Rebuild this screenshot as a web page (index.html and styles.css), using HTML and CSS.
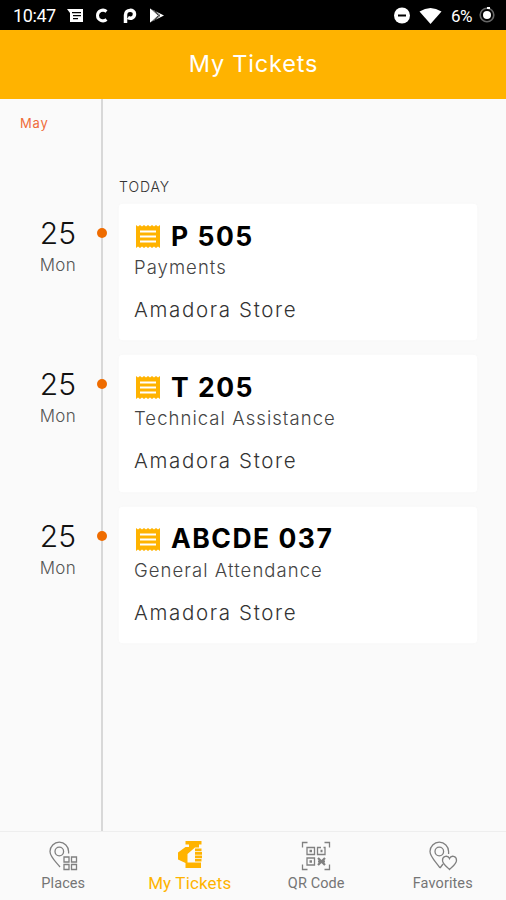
FILE: index.html
```html
<!DOCTYPE html>
<html lang="en">
<head>
    <meta charset="UTF-8">
    <meta name="viewport" content="width=device-width, initial-scale=1.0">
    <title>My Tickets</title>
    <link rel="stylesheet" href="styles.css">
</head>
<body>
    <svg class="defs">
        <symbol id="receipt" viewBox="0 0 24 25">
            <path fill="#ffb300" d="M0 1l2 1.5L4 1l2 1.5L8 1l2 1.5L12 1l2 1.5L16 1l2 1.5L20 1l2 1.5L24 1v23l-2-1.500-2 1.500-2-1.500-2 1.500-2-1.500-2 1.500-2-1.500-2 1.500-2-1.500-2 1.500-2-1.500-2 1.500z"/>
            <path stroke="#fff" stroke-width="2.200" d="M4 7.500h16M4 12.500h16M4 17.500h16"/>
        </symbol>
    </svg>

    <div class="statusbar">
        <span class="clock">10:47</span>
        <svg class="notifications" width="100" height="20" viewBox="0 0 100 20">
            <path fill="#fff" d="M-1 3h16v13H2V7z"/>
            <path stroke="#000" stroke-width="1.300" d="M4 6.700h9M5 9.700h8M5 12.700h5"/>
            <path fill="none" stroke="#fff" stroke-width="3" d="M38.500 5.500C35 2.500 29.500 5 29.500 9.500s5.500 7 9 4"/>
            <path fill="none" stroke="#fff" stroke-width="3.500" d="M57.500 17V9c0-6 9-6 9-1 0 4-4 5-6.500 3.500"/>
            <path fill="#fff" d="M82 2.500l14 7-14 7z"/>
            <path fill="none" stroke="#000" stroke-width=".8" d="M83 2.500l7.500 7-7.500 7M87 5l5 4.500-5 4.500"/>
        </svg>
        <svg class="signals" width="50" height="20" viewBox="0 0 50 20">
            <circle cx="8" cy="9.500" r="8" fill="#fff"/>
            <path stroke="#000" stroke-width="2" d="M4 9.500h8"/>
            <path fill="#fff" d="M25.500 5.500Q36.500-1.500 47.500 5.500L36.500 18z"/>
        </svg>
        <span class="battery">6%</span>
        <svg width="16" height="20" viewBox="0 0 16 20">
            <circle cx="8" cy="9" r="6.800" fill="none" stroke="#666" stroke-width="1.600"/>
            <circle cx="8" cy="9" r="4" fill="#fff"/>
            <path stroke="#fff" stroke-width="2" d="M8 2h3"/>
        </svg>
    </div>

    <h1 id="header">My Tickets</h1>

    <main class="timeline">
        <div class="month">May</div>
        <div class="today">TODAY</div>

        <div class="entry">
            <div class="date">
                <div class="day">25</div>
                <div class="weekday">Mon</div>
            </div>
            <span class="dot"></span>
            <div class="card">
                <div class="number"><svg class="receipt"><use href="#receipt"/></svg><span>P 505</span></div>
                <div class="service">Payments</div>
                <div class="store">Amadora Store</div>
            </div>
        </div>

        <div class="entry">
            <div class="date">
                <div class="day">25</div>
                <div class="weekday">Mon</div>
            </div>
            <span class="dot"></span>
            <div class="card">
                <div class="number"><svg class="receipt"><use href="#receipt"/></svg><span>T 205</span></div>
                <div class="service">Technical Assistance</div>
                <div class="store">Amadora Store</div>
            </div>
        </div>

        <div class="entry">
            <div class="date">
                <div class="day">25</div>
                <div class="weekday">Mon</div>
            </div>
            <span class="dot"></span>
            <div class="card">
                <div class="number"><svg class="receipt"><use href="#receipt"/></svg><span>ABCDE 037</span></div>
                <div class="service">General Attendance</div>
                <div class="store">Amadora Store</div>
            </div>
        </div>
    </main>

    <nav class="tabs">
        <a class="tab">
            <svg width="30" height="30" viewBox="0 0 30 30">
                <path d="M12 26C9 22 2 16 2 10.500a9.300 9.300 0 0 1 18.600 0v2"/>
                <circle cx="11.300" cy="10.500" r="4.300"/>
                <path d="M16 16h5v5h-5zM23.500 16h5v5h-5zM16 23.500h5v5h-5zM23.500 23.500h5v5h-5z"/>
            </svg>
            <span>Places</span>
        </a>
        <a class="tab active">
            <svg width="30" height="30" viewBox="0 0 30 30">
                <path d="M10.500 1h16v3.500H24V7.500h-4L12.500 14v8.500H26V28H10.500v-5L3 19.500v-7L10.500 7H14V4.500h-3.500z"/>
                <path d="M20 8.500h6.500v2.700H20zM20 12h7v2.700h-7zM20 15.500h7v2.700h-7zM20 19h6.500v2.500H20z"/>
            </svg>
            <span>My Tickets</span>
        </a>
        <a class="tab">
            <svg width="30" height="30" viewBox="0 0 30 30">
                <path d="M1.500 6.500v-5h5M23.500 1.500h5v5M28.500 23.500v5h-5M6.500 28.500h-5v-5"/>
                <path d="M6 6.500h7.500v7H6zM6 17h7.500v7H6zM20 6.500h-3.500v7h7.500v-7h-1.500"/>
                <path stroke-width="2.500" d="M8.500 10h2.500M8.500 20.500h2.500M19.500 10h2"/>
                <path stroke-width="2.200" d="M17 17l7 7M24 17l-7 7M17 20.500h7"/>
            </svg>
            <span>QR Code</span>
        </a>
        <a class="tab">
            <svg width="30" height="30" viewBox="0 0 30 30">
                <path d="M12 27C9 22 2 16 2 10.500a9.300 9.300 0 0 1 18.600 0v2.500"/>
                <circle cx="11.300" cy="10.500" r="4.300"/>
                <path d="M21.500 28.500c-3-3-7-5.500-7-9.300 0-4.500 5.500-5.200 7-1.700 1.500-3.500 7-2.800 7 1.700 0 3.800-4 6.300-7 9.300zM12 27l3-4"/>
            </svg>
            <span>Favorites</span>
        </a>
    </nav>
</body>
</html>
```
FILE: styles.css
```css
*{
    margin: 0;
    padding: 0;
    box-sizing: border-box;
}
body{
    width: 506px;
    height: 900px;
    display: flex;
    flex-direction: column;
    background-color: #fafafa;
    font-family: Inter, "Liberation Sans", sans-serif;
    white-space: nowrap;
    overflow: hidden;
}
.defs{
    display: none;
}
.statusbar{
    height: 30px;
    display: flex;
    align-items: center;
    padding: 2px 11px 0 13px;
    background-color: #000;
    color: #fff;
    font-family: Roboto, sans-serif;
    font-size: 18px;
}
.clock{
    width: 55px;
    line-height: 26px;
    letter-spacing: -0.4px;
}
.notifications{
    overflow: visible;
}
.signals{
    margin-left: auto;
}
.battery{
    width: 24px;
    margin: 0 4px 0 7px;
    font-size: 17px;
    letter-spacing: -0.5px;
}
#header{
    height: 69px;
    line-height: 68px;
    padding-left: 1px;
    text-align: center;
    color: #fff;
    background-color: #ffb300;
    font-size: 23.5px;
    font-weight: 400;
    letter-spacing: 0.8px;
}
.timeline{
    flex: 1;
    background: linear-gradient(#d8d8d8, #d8d8d8) 101px 0 / 2px 100% no-repeat;
}
.month{
    padding: 15px 0 0 20px;
    line-height: 18px;
    font-size: 13px;
    color: #ef6c3a;
    letter-spacing: 0.8px;
}
.today{
    padding: 46px 0 8px 119px;
    line-height: 18px;
    font-size: 14px;
    font-weight: 300;
    color: #333;
    letter-spacing: 0.9px;
}
.entry{
    display: grid;
    grid-template-columns: 96px 11px 370px;
    height: 136.3px;
    margin-bottom: 15px;
}
.date{
    padding: 10px 20px 0 0;
    text-align: right;
}
.day{
    line-height: 38px;
    font-size: 30px;
    font-weight: 300;
    color: #111;
}
.weekday{
    line-height: 26px;
    font-size: 17px;
    font-weight: 300;
    color: #555;
    letter-spacing: 0.3px;
}
.dot{
    width: 10px;
    height: 10px;
    margin: 24px 0 0 0.5px;
    border-radius: 50%;
    background-color: #ef6c00;
}
.card{
    margin-left: 12px;
    width: 358px;
    padding: 14px 15px;
    background-color: #fff;
    border-radius: 3px;
    box-shadow: 0 0 3px #f8f8f8;
}
.number{
    display: flex;
    align-items: center;
    gap: 11px;
    height: 35px;
    padding-left: 2px;
    font-size: 26.5px;
    font-weight: 700;
    color: #000;
    letter-spacing: 1.5px;
}
.receipt{
    width: 24px;
    height: 25px;
    margin-top: 2px;
}
.service{
    line-height: 29px;
    font-size: 18.5px;
    font-weight: 300;
    color: #444;
    letter-spacing: 1.05px;
}
.store{
    margin-top: 13px;
    line-height: 30px;
    font-size: 20.5px;
    font-weight: 300;
    color: #333;
    letter-spacing: 1.65px;
}
.tabs{
    height: 69px;
    display: grid;
    grid-template-columns: repeat(4, 1fr);
    border-top: 1px solid #eee;
}
.tab{
    display: flex;
    flex-direction: column;
    align-items: center;
    padding-top: 9px;
    font-family: Roboto, sans-serif;
    font-size: 14.5px;
    line-height: 26px;
    color: #757575;
    letter-spacing: 0.1px;
}
.tab svg{
    fill: none;
    stroke: #808080;
    stroke-width: 1.3;
}
.tab.active{
    padding-top: 8px;
    font-size: 17px;
    color: #ffb300;
    letter-spacing: 0.15px;
}
.tab.active svg{
    fill: #ffb300;
    stroke: none;
}
```
